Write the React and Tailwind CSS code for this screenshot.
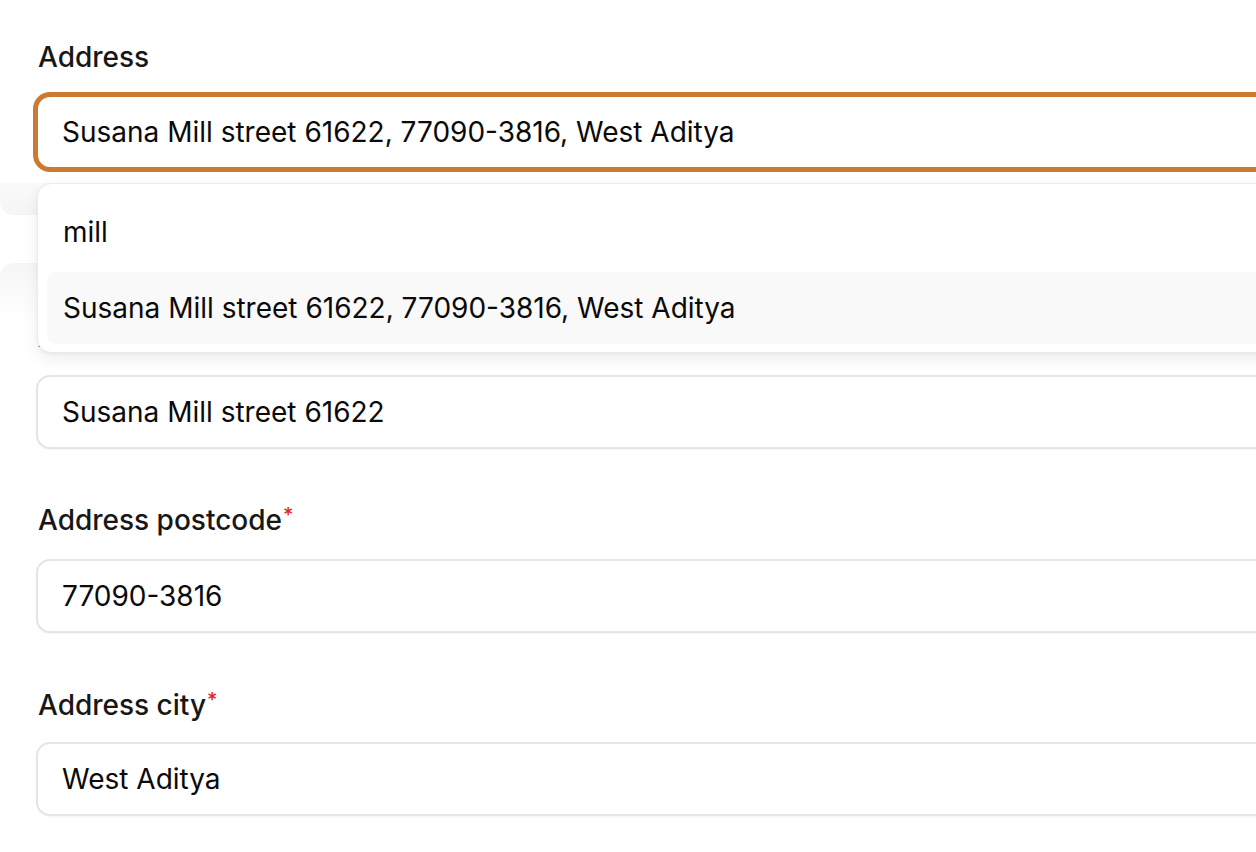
import React from "react";

const font = { fontFamily: "Inter, 'Noto Sans', sans-serif" };

function Label({ children, required }) {
  return (
    <div className="flex h-[32px] items-start pl-[2px] text-[28px] font-medium leading-[32px] text-[#171717]">
      <span>{children}</span>
      {required && <span className="ml-[1px] mt-[2px] text-[20px] leading-[18px] text-[#dc2626]">*</span>}
    </div>
  );
}

function Input({ value }) {
  return (
    <div className="flex h-[74px] items-center rounded-[14px] border-2 border-[#e5e5e5] bg-white pl-[24px] text-[28px] text-[#0a0a0a] shadow-[0_1px_2px_rgba(0,0,0,0.04)]">
      {value}
    </div>
  );
}

export default function App() {
  const full = "Susana Mill street 61622, 77090-3816, West Aditya";
  return (
    <div style={font} className="relative h-[852px] w-[1256px] overflow-hidden bg-white">
      <div className="w-[1300px] pl-[36px] pt-[41px]">
        <Label>Address</Label>
        <div className="relative mt-[22px]">
          <div className="flex h-[74px] items-center rounded-[14px] border-2 border-[#cd7a31] bg-white pl-[24px] text-[28px] text-[#0a0a0a] ring-[3px] ring-[#cd7a31]">
            {full}
          </div>
          {/* dropdown */}
          <div className="absolute left-[1px] right-0 top-[88px] z-10 rounded-[14px] border border-[#ebebeb] bg-white px-[9px] pb-[8px] shadow-[0_6px_16px_rgba(0,0,0,0.07),0_1px_3px_rgba(0,0,0,0.05)]">
            <div className="flex h-[88px] items-center pl-[16px] pt-[8px] text-[28px] text-[#0a0a0a]">mill</div>
            <div className="flex h-[72px] items-center rounded-[10px] bg-[#f9f9f9] pl-[16px] text-[28px] text-[#0a0a0a]">
              {full}
            </div>
          </div>
        </div>
        {/* faint elements hidden behind the dropdown */}
        <div className="-ml-[36px] mt-[14px] h-[32px] rounded-b-[14px] bg-gradient-to-b from-[#fafafa] to-[#f5f5f5]" />
        <div className="-ml-[36px] mt-[48px] h-[58px] rounded-t-[14px] bg-gradient-to-b from-[#f6f6f6] to-white" />
        <Label required>Address street</Label>
        <div className="mt-[22px]">
          <Input value="Susana Mill street 61622" />
        </div>
        <div className="mt-[55px]">
          <Label required>Address postcode</Label>
        </div>
        <div className="mt-[23px]">
          <Input value="77090-3816" />
        </div>
        <div className="mt-[56px]">
          <Label required>Address city</Label>
        </div>
        <div className="mt-[21px]">
          <Input value="West Aditya" />
        </div>
      </div>
    </div>
  );
}
